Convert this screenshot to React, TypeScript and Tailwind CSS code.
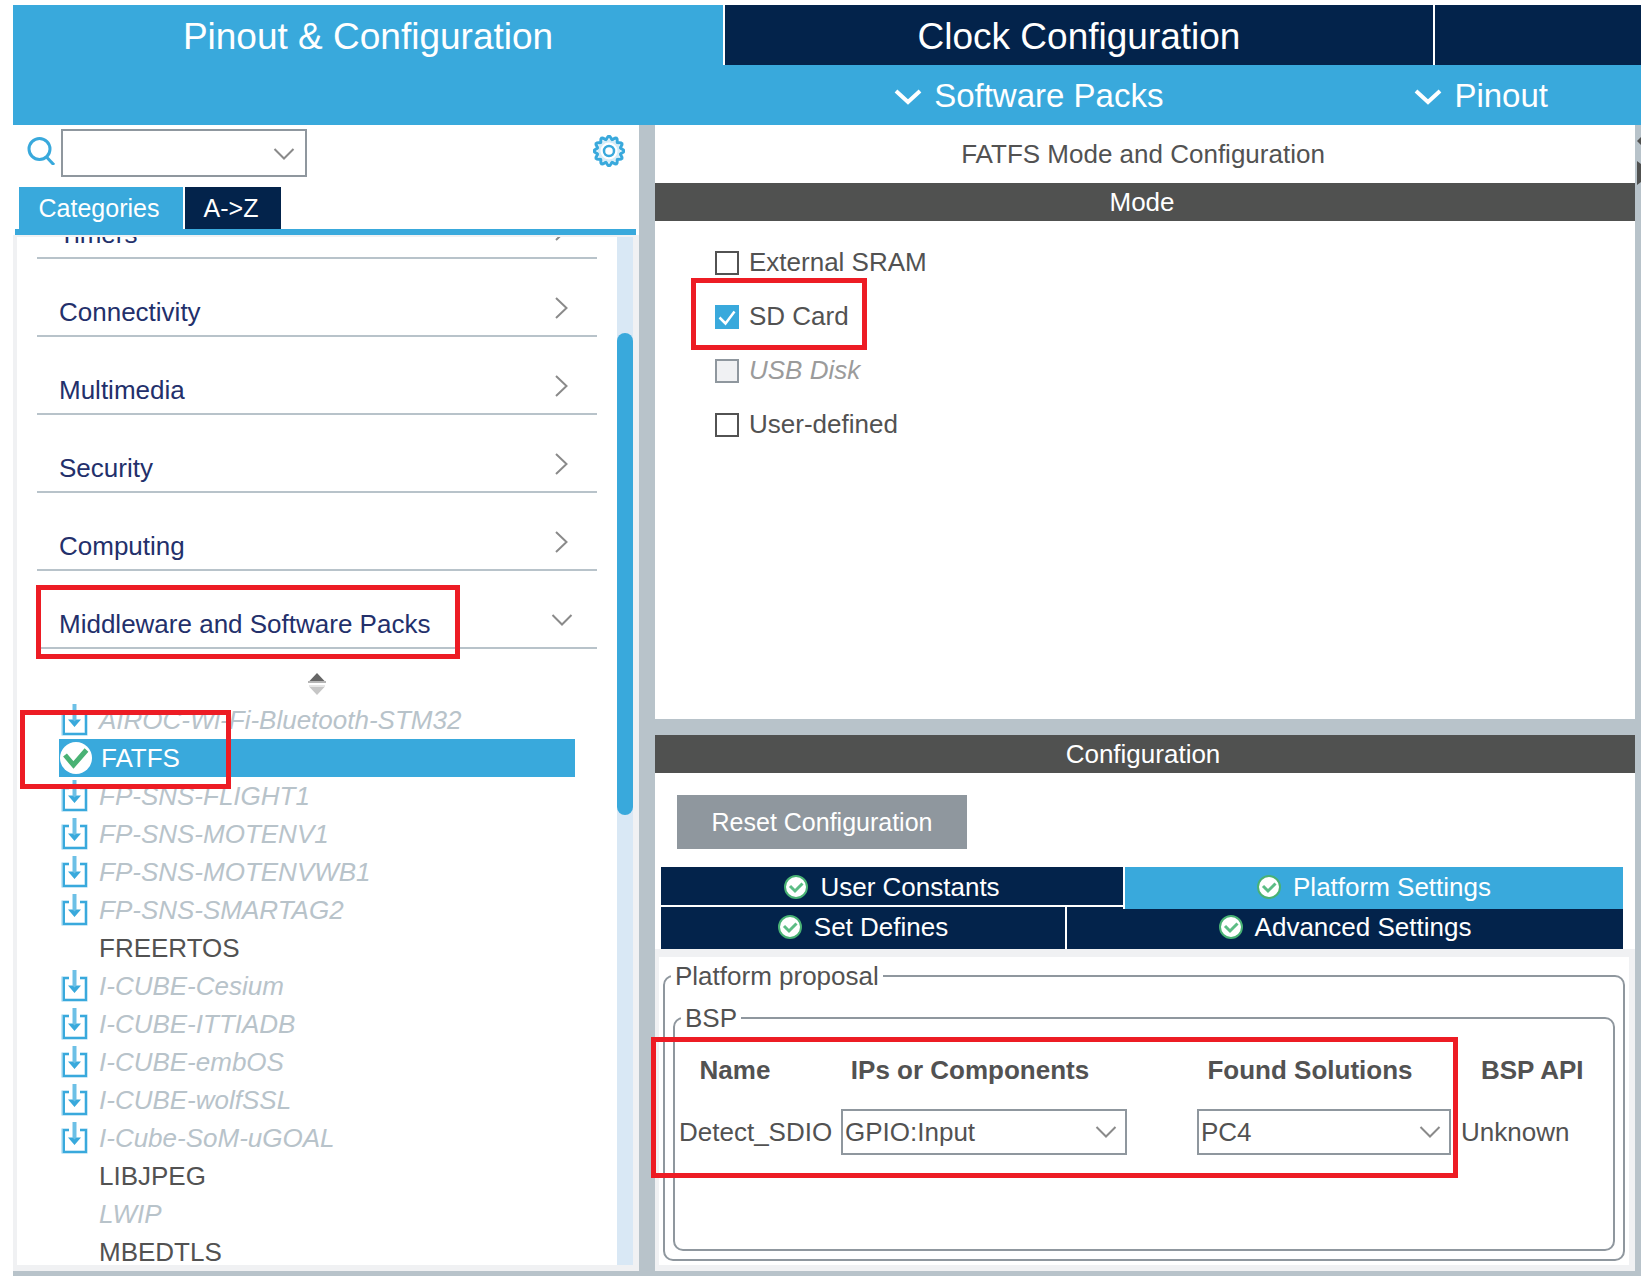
import React from "react";

const categories = ["Timers", "Connectivity", "Multimedia", "Security", "Computing"];

type Pack = { name: string; kind: "install" | "active" | "plain" | "disabled" };

const packs: Pack[] = [
  { name: "AIROC-Wi-Fi-Bluetooth-STM32", kind: "install" },
  { name: "FATFS", kind: "active" },
  { name: "FP-SNS-FLIGHT1", kind: "install" },
  { name: "FP-SNS-MOTENV1", kind: "install" },
  { name: "FP-SNS-MOTENVWB1", kind: "install" },
  { name: "FP-SNS-SMARTAG2", kind: "install" },
  { name: "FREERTOS", kind: "plain" },
  { name: "I-CUBE-Cesium", kind: "install" },
  { name: "I-CUBE-ITTIADB", kind: "install" },
  { name: "I-CUBE-embOS", kind: "install" },
  { name: "I-CUBE-wolfSSL", kind: "install" },
  { name: "I-Cube-SoM-uGOAL", kind: "install" },
  { name: "LIBJPEG", kind: "plain" },
  { name: "LWIP", kind: "disabled" },
  { name: "MBEDTLS", kind: "plain" },
];

function Highlight({ className }: { className: string }) {
  return <span aria-hidden className={`pointer-events-none absolute z-20 border-5 border-[#ed1c24] ${className}`} />;
}

function ChevronRight() {
  return (
    <svg className="mr-3 mb-2 h-6 w-4 shrink-0" viewBox="0 0 16 24" fill="none" stroke="#8a8a8a" strokeWidth="2">
      <path d="M3 2 13.500 12 3 22" />
    </svg>
  );
}

function ChevronDown({ className }: { className: string }) {
  return (
    <svg className={className} viewBox="0 0 22 14" fill="none" stroke="#8a8a8a" strokeWidth="2">
      <path d="M1.500 2 11 11.500 20.500 2" />
    </svg>
  );
}

function MenuChevron() {
  return (
    <svg className="mt-0.5 h-4 w-7" viewBox="0 0 28 16" fill="none" stroke="#fff" strokeWidth="4">
      <path d="M2 2 14 13 26 2" />
    </svg>
  );
}

function InstallIcon() {
  return (
    <svg className="h-8 w-7 shrink-0" viewBox="0 0 28 32" fill="none">
      <path d="M9 8H3V30H26V8H20" stroke="#8fd0ee" strokeWidth="3" />
      <path d="M9 8H4V30H26V8H20" stroke="#39a9dc" strokeWidth="2" />
      <path d="M14.500 0V20" stroke="#6dc0e6" strokeWidth="4" />
      <path d="M8 15.500H12.500L14.500 17.500 16.500 15.500H21L14.500 23Z" fill="#39a9dc" />
    </svg>
  );
}

function ActiveIcon() {
  return (
    <svg className="h-8 w-8 shrink-0" viewBox="0 0 32 32" fill="none">
      <circle cx="16" cy="16" r="16" fill="#fff" />
      <path d="M5 13 13.500 23 26.500 8" stroke="#49b274" strokeWidth="5" />
    </svg>
  );
}

function OkIcon() {
  return (
    <svg className="h-6 w-6 shrink-0" viewBox="0 0 24 24" fill="none">
      <circle cx="12" cy="12" r="11" fill="#fff" stroke="#49b274" strokeWidth="2" />
      <path d="M6 11 11 16 18.500 8.500" stroke="#5cbd85" strokeWidth="3" />
    </svg>
  );
}

const gearPath = (() => {
  const points: string[] = [];
  const total = 96;
  for (let i = 0; i < total; i++) {
    const a = (i / total) * Math.PI * 2;
    const r = 13.4 + 1.5 * Math.cos(a * 12);
    points.push(`${(16 + r * Math.sin(a)).toFixed(2)} ${(16 - r * Math.cos(a)).toFixed(2)}`);
  }
  return `M${points.join("L")}Z`;
})();

function GearIcon() {
  return (
    <svg className="h-8 w-8" viewBox="0 0 32 32" fill="none" stroke="#39a9dc">
      <circle cx="16" cy="16" r="10" stroke="#d6edf8" strokeWidth="3" />
      <path d={gearPath} strokeWidth="3" />
      <circle cx="16" cy="16" r="5" strokeWidth="2.500" />
    </svg>
  );
}

function SearchIcon() {
  return (
    <svg className="mt-2 mr-1.5 h-7 w-7" viewBox="0 0 28 28" fill="none" stroke="#39a9dc" strokeWidth="3">
      <circle cx="12.500" cy="12" r="10.500" />
      <path d="M19 19.500 27 28" />
    </svg>
  );
}

function PackRow({ name, kind }: Pack) {
  const tone =
    kind === "active"
      ? "bg-[#39a9dc] text-white"
      : kind === "plain"
        ? "text-[#525252]"
        : "italic text-[#b8c3ca]";
  return (
    <li className="relative">
      <button type="button" className={`flex h-[38px] w-full items-center pl-px text-left ${tone}`}>
        <span className={kind === "active" ? "w-[41px]" : "w-[39px]"}>
          {kind === "install" && <InstallIcon />}
          {kind === "active" && <ActiveIcon />}
        </span>
        {name}
      </button>
      {kind === "active" && <Highlight className="-top-[29px] -left-[39px] h-[79px] w-[211px]" />}
    </li>
  );
}

function Sidebar() {
  return (
    <aside className="flex w-[626px] shrink-0 flex-col bg-white">
      <div className="flex h-[62px] items-start pt-1 pr-3.5 pl-3.5">
        <SearchIcon />
        <div className="relative">
          <select aria-label="Search" className="h-12 w-[246px] appearance-none border-2 border-[#8f979e] bg-white px-2">
            <option></option>
          </select>
          <ChevronDown className="pointer-events-none absolute top-[18px] right-3 h-3.5 w-[22px]" />
        </div>
        <button type="button" aria-label="Settings" className="mt-1.5 ml-auto">
          <GearIcon />
        </button>
      </div>
      <div className="mr-[3px] ml-0.5 flex gap-0.5 border-b-6 border-[#39a9dc] pl-1 text-[25px] text-white">
        <button type="button" className="h-[42px] w-[164px] bg-[#39a9dc] pr-1">Categories</button>
        <button type="button" className="h-[42px] w-24 bg-[#03234b] pr-1">A-&gt;Z</button>
      </div>
      <div className="flex min-h-0 flex-1 border-t-2 border-r-6 border-b-6 border-l-4 border-[#f0f1f3]">
        <div className="min-w-0 flex-1 overflow-hidden pr-5 pl-5">
          <ul className="-mt-14 text-[#23306b]">
            {categories.map((c) => (
              <li key={c}>
                <button type="button" className="flex h-[78px] w-full items-center justify-between border-b-2 border-[#b8c3ca] pt-[30px] pr-4 pl-[22px]">
                  {c}
                  <ChevronRight />
                </button>
              </li>
            ))}
            <li className="relative">
              <button type="button" className="flex h-[78px] w-full items-center justify-between border-b-2 border-[#b8c3ca] pt-[30px] pr-6 pl-[22px]">
                Middleware and Software Packs
                <ChevronDown className="mb-2 h-3.5 w-[22px]" />
              </button>
              <Highlight className="top-3.5 -left-px h-[74px] w-[424px]" />
            </li>
          </ul>
          <div className="flex h-[52px] justify-center pt-6">
            <svg className="h-[22px] w-[18px]" viewBox="0 0 18 22">
              <path d="M9 0 16.500 8H1.500Z" fill="#666" />
              <path d="M0 8H18V10H0Z" fill="#b5b5b5" />
              <path d="M1 12H17V14H1Z" fill="#e6e6e6" />
              <path d="M1.500 14H16.500L9 22Z" fill="#c6c6c6" />
            </svg>
          </div>
          <ul className="mr-[22px] ml-[22px]">
            {packs.map((p) => (
              <PackRow key={p.name} {...p} />
            ))}
          </ul>
        </div>
        <div className="w-4 shrink-0 bg-[#d9e8f5] pt-24">
          <div className="h-[482px] rounded-full bg-[#39a9dc]" />
        </div>
      </div>
    </aside>
  );
}

type Mode = { label: string; checked?: boolean; disabled?: boolean };

const modes: Mode[] = [
  { label: "External SRAM" },
  { label: "SD Card", checked: true },
  { label: "USB Disk", disabled: true },
  { label: "User-defined" },
];

function ModeOption({ label, checked, disabled }: Mode) {
  return (
    <div className="relative flex">
      <label className={`flex items-center gap-2.5 ${disabled ? "text-[#9b9b9b] italic" : "text-[#525252]"}`}>
        <span className="relative mt-0.5 h-6 w-6">
          <input
            type="checkbox"
            defaultChecked={checked}
            disabled={disabled}
            className="block h-6 w-6 appearance-none border-2 border-[#525252] bg-white checked:border-[#39a9dc] checked:bg-[#39a9dc] disabled:border-[#8f979e] disabled:bg-[#f0f1f3]"
          />
          {checked && (
            <svg className="pointer-events-none absolute inset-0 h-6 w-6" viewBox="0 0 24 24" fill="none" stroke="#fff" strokeWidth="2.500">
              <path d="M4.500 12.500 10.500 18.500 19.500 6.500" />
            </svg>
          )}
        </span>
        {label}
      </label>
      {checked && <Highlight className="-top-[21px] -left-6 h-[72px] w-44" />}
    </div>
  );
}

function SettingsTab({ label, className }: { label: string; className: string }) {
  return (
    <button type="button" className={`flex items-center justify-center gap-3 ${className}`}>
      <OkIcon />
      {label}
    </button>
  );
}

function Combo({ label, value }: { label: string; value: string }) {
  return (
    <div className="relative">
      <select aria-label={label} className="block h-[46px] w-full appearance-none border-2 border-[#8f979e] bg-white pl-0.5">
        <option>{value}</option>
      </select>
      <ChevronDown className="pointer-events-none absolute top-4 right-2.5 h-3.5 w-[22px]" />
    </div>
  );
}

function Configuration() {
  return (
    <section className="border-t-16 border-[#b8c3ca] bg-white">
      <h2 className="h-[38px] bg-[#505150] pr-1 text-center leading-[38px] text-white">Configuration</h2>
      <button type="button" className="mt-[22px] ml-[22px] block h-[54px] w-[290px] bg-[#8f979e] text-[25px] text-white">
        Reset Configuration
      </button>
      <div className="mt-[18px] mr-3 ml-1.5 text-white">
        <div className="relative z-10 flex">
          <SettingsTab label="User Constants" className="h-[38px] flex-[463] bg-[#03234b] pt-0.5" />
          <SettingsTab label="Platform Settings" className="-mb-0.5 h-[42px] flex-[499] border-l-2 border-white bg-[#39a9dc] pb-0.5" />
        </div>
        <div className="flex gap-0.5">
          <SettingsTab label="Set Defines" className="h-[42px] flex-[404] bg-[#03234b] pb-0.5" />
          <SettingsTab label="Advanced Settings" className="h-[42px] flex-[556] bg-[#03234b] pb-0.5" />
        </div>
      </div>
      <div className="border-t-8 border-r-6 border-b-6 border-l-4 border-[#f0f1f3] p-1">
        <fieldset className="rounded-[10px] border-2 border-[#8f979e] px-2 pb-2">
          <legend className="-ml-0.5 px-1 leading-[30px]">Platform proposal</legend>
          <fieldset className="mt-3 rounded-[10px] border-2 border-[#8f979e] pb-[94px]">
            <legend className="ml-1.5 px-1 leading-[30px]">BSP</legend>
            <div className="relative">
              <table className="w-full table-fixed">
                <colgroup>
                  <col className="w-[166px]" />
                  <col className="w-[286px]" />
                  <col className="w-[70px]" />
                  <col className="w-[254px]" />
                  <col />
                </colgroup>
                <thead>
                  <tr className="h-[76px] align-top">
                    <th className="pt-5 pr-[46px] leading-[34px]">Name</th>
                    <th className="pt-5 pr-7 leading-[34px]">IPs or Components</th>
                    <td></td>
                    <th className="pt-5 pr-7 leading-[34px]">Found Solutions</th>
                    <th className="pt-5 pl-[30px] text-left leading-[34px]">BSP API</th>
                  </tr>
                </thead>
                <tbody>
                  <tr>
                    <td className="pl-1">Detect_SDIO</td>
                    <td>
                      <Combo label="IPs or Components" value="GPIO:Input" />
                    </td>
                    <td></td>
                    <td>
                      <Combo label="Found Solutions" value="PC4" />
                    </td>
                    <td className="pl-2.5">Unknown</td>
                  </tr>
                </tbody>
              </table>
              <Highlight className="top-1 -left-6 h-[141px] w-[807px]" />
            </div>
          </fieldset>
        </fieldset>
      </div>
    </section>
  );
}

export default function App() {
  return (
    <div className="flex h-screen flex-col overflow-hidden bg-white pt-[5px] pl-[13px] font-['Liberation_Sans',Arial,sans-serif] text-[26px] leading-[34px] text-[#525252]">
      <header className="shrink-0 bg-[#39a9dc] text-white">
        <nav className="grid h-[60px] grid-cols-[710fr_712fr_206fr] text-[37px]">
          <button type="button" className="bg-[#39a9dc] pt-[3px]">Pinout &amp; Configuration</button>
          <button type="button" className="border-r-2 border-l-2 border-white bg-[#03234b] pt-[3px]">Clock Configuration</button>
          <button type="button" aria-label="Project Manager" className="bg-[#03234b]" />
        </nav>
        <div className="flex h-[60px] items-center justify-end gap-[251px] pt-0.5 pr-[93px] text-[33px]">
          <button type="button" className="flex items-center gap-3">
            <MenuChevron />
            Software Packs
          </button>
          <button type="button" className="flex items-center gap-3">
            <MenuChevron />
            Pinout
          </button>
        </div>
      </header>
      <main className="flex min-h-0 flex-1 border-b-5 border-[#b8c3ca]">
        <Sidebar />
        <div className="w-4 shrink-0 bg-[#b8c3ca]" />
        <div className="flex min-w-0 flex-1 flex-col">
          <h1 className="h-[58px] pr-1 text-center leading-[58px]">FATFS Mode and Configuration</h1>
          <section className="min-h-0 flex-1">
            <h2 className="h-[38px] bg-[#505150] pr-1.5 text-center leading-[38px] text-white">Mode</h2>
            <div className="flex flex-col gap-5 pt-6 pl-[60px]">
              {modes.map((m) => (
                <ModeOption key={m.label} {...m} />
              ))}
            </div>
          </section>
          <Configuration />
        </div>
        <div className="w-1.5 shrink-0 bg-[#b8c3ca]">
          <svg className="mt-2 h-14 w-1.5" viewBox="0 0 6 56" fill="#505150">
            <path d="M6 4V12L2 8Z" />
            <path d="M2 28 6 31V49L2 52Z" />
          </svg>
        </div>
      </main>
    </div>
  );
}
